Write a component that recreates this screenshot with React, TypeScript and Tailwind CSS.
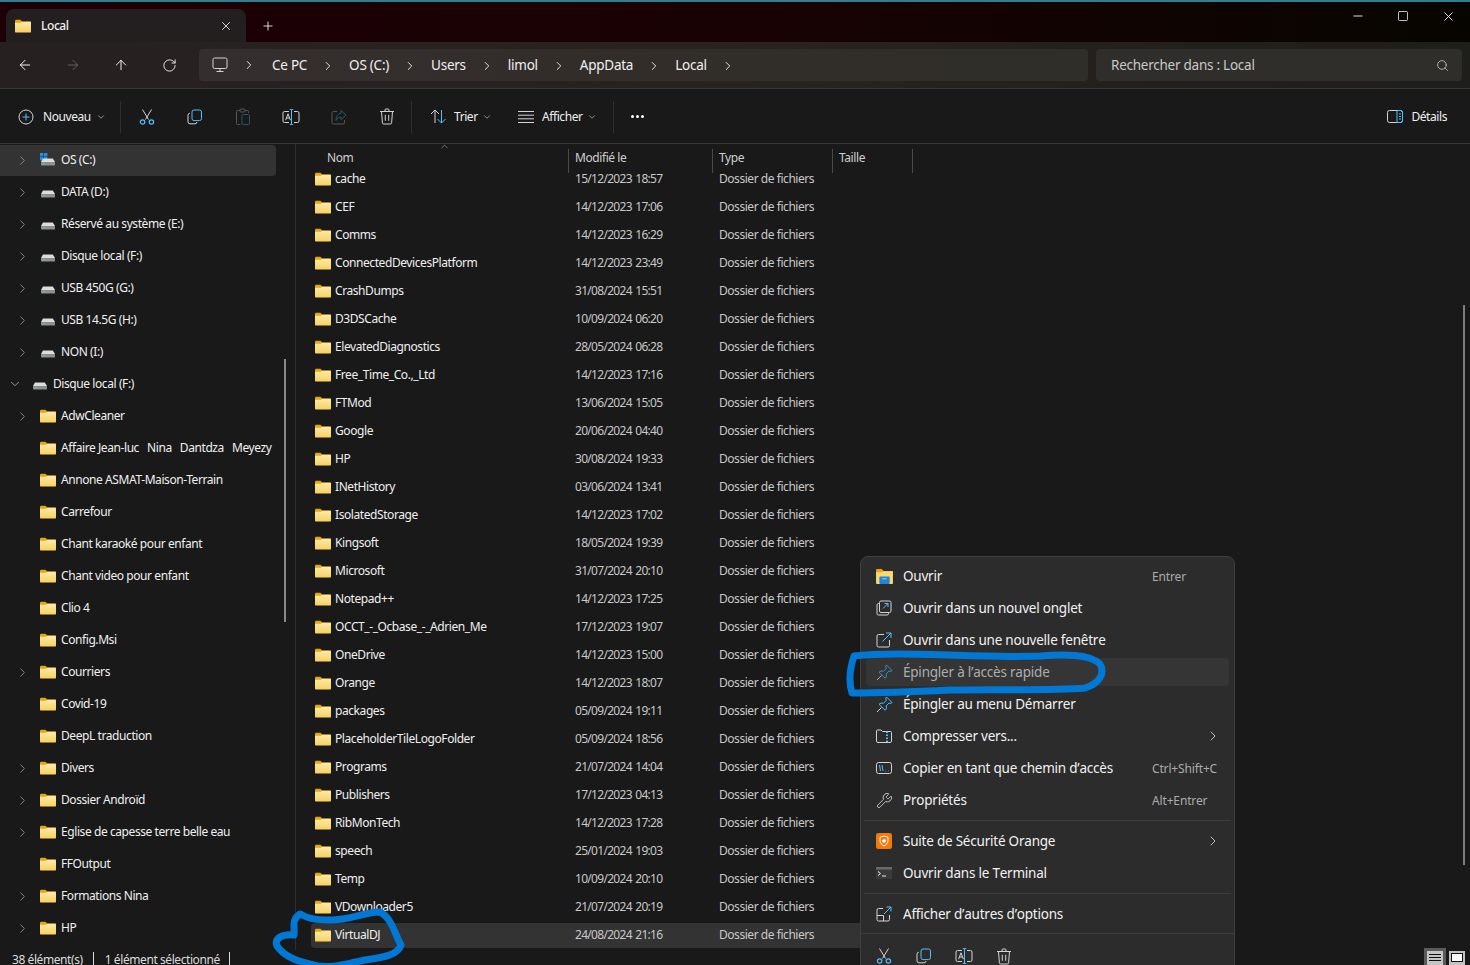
import {
  ArrowLeft,
  ArrowRight,
  ArrowUp,
  ChevronDown,
  ChevronRight,
  ChevronUp,
  Minus,
  Plus,
  RotateCw,
  Search,
  Square,
  Wrench,
  X,
} from "lucide-react";
import type { ReactNode } from "react";

const BLUE = "#4cc2ff";
const GREY = "#d4d4d4";

type IconProps = { dim?: boolean };

function FolderIcon() {
  return (
    <svg width="16" height="14" viewBox="0 0 16 14" className="shrink-0">
      <defs>
        <linearGradient id="folderFront" x1="0" y1="0" x2="0" y2="1">
          <stop offset="0" stopColor="#fdeaa8" />
          <stop offset="1" stopColor="#f9d060" />
        </linearGradient>
      </defs>
      <path d="M0 2a1.200 1.200 0 0 1 1.200-1.200h4.200L7.200 2.600H16V6H0z" fill="#e8a50c" />
      <path d="M0 3.800h5.600L7.200 2.800h7.600A1.200 1.200 0 0 1 16 4v8.400a1.200 1.200 0 0 1-1.200 1.200H1.200A1.200 1.200 0 0 1 0 12.400z" fill="url(#folderFront)" />
    </svg>
  );
}

function DriveIcon({ os }: { os?: boolean }) {
  return (
    <svg width="16" height="14" viewBox="0 0 16 14" className="shrink-0">
      {os && (
        <g fill="#1e90ea">
          <rect x="0" y="0" width="3.400" height="3.400" />
          <rect x="4" y="0" width="3.400" height="3.400" />
          <rect x="0" y="4" width="3.400" height="3.400" />
          <rect x="4" y="4" width="3.400" height="3.400" />
        </g>
      )}
      <path d="M3 5.500h9.800L15 9H1z" fill="#dcdcdc" />
      <rect x="1" y="9" width="14" height="3.400" rx="0.600" fill="#8f8f8f" />
      <rect x="3" y="10.200" width="1.400" height="1.200" fill="#4ee06a" />
    </svg>
  );
}

function NewIcon() {
  return (
    <svg width="16" height="16" viewBox="0 0 16 16" fill="none">
      <circle cx="8" cy="8" r="7" stroke={GREY} />
      <path d="M8 4.500v7M4.500 8h7" stroke={BLUE} />
    </svg>
  );
}

function CutIcon() {
  return (
    <svg width="16" height="16" viewBox="0 0 16 16" fill="none">
      <path d="M3.500 0.500l6 10M12.500 0.500l-6 10" stroke={GREY} />
      <circle cx="3.600" cy="13" r="2.200" stroke={BLUE} strokeWidth="1.200" />
      <circle cx="12.400" cy="13" r="2.200" stroke={BLUE} strokeWidth="1.200" />
    </svg>
  );
}

function CopyIcon() {
  return (
    <svg width="16" height="16" viewBox="0 0 16 16" fill="none">
      <path d="M2.800 4.200A2 2 0 0 0 1 6.200v6.600a2 2 0 0 0 2 2h5a2 2 0 0 0 2-1.800" stroke={GREY} />
      <rect x="5" y="1" width="9.500" height="10.600" rx="2" stroke={BLUE} />
    </svg>
  );
}

function PasteIcon() {
  return (
    <svg width="16" height="18" viewBox="0 0 16 18" fill="none">
      <path d="M5 2.500H2.500a1 1 0 0 0-1 1v12a1 1 0 0 0 1 1h3M10 2.500h2.500a1 1 0 0 1 1 1V5" stroke="#555" />
      <rect x="5" y="1" width="5" height="3" rx="1" stroke="#555" />
      <rect x="7" y="6.500" width="7.500" height="10" rx="1.200" stroke="#27566f" />
    </svg>
  );
}

function RenameIcon() {
  return (
    <svg width="18" height="16" viewBox="0 0 18 16" fill="none">
      <path d="M7 2.500H2.500a1.500 1.500 0 0 0-1.500 1.500v8a1.500 1.500 0 0 0 1.500 1.500H7M12 2.500h3.500A1.500 1.500 0 0 1 17 4v8a1.500 1.500 0 0 1-1.500 1.500H12" stroke={GREY} />
      <path d="M9.500 1v14M7.800 0.600h3.400M7.800 15.400h3.400" stroke={BLUE} />
      <path d="M3.600 11.200L6 4.800l2.400 6.400M4.500 9h3" stroke={GREY} />
    </svg>
  );
}

function ShareIcon() {
  return (
    <svg width="16" height="16" viewBox="0 0 16 16" fill="none">
      <path d="M6 2.500H2.500a1.500 1.500 0 0 0-1.500 1.500v9.500A1.500 1.500 0 0 0 2.500 15H12a1.500 1.500 0 0 0 1.500-1.500V11" stroke="#555" />
      <path d="M10 1.500L15 6l-5 4.500V8C7.500 8 6 9.500 5 11.500 5 8 6.500 4.500 10 4.200z" stroke="#27566f" />
    </svg>
  );
}

function TrashIcon() {
  return (
    <svg width="16" height="17" viewBox="0 0 16 17" fill="none">
      <path d="M1 3.500h14M6 3.500V2a1 1 0 0 1 1-1h2a1 1 0 0 1 1 1v1.500" stroke={GREY} />
      <path d="M2.500 3.500l.9 11.400A1.300 1.300 0 0 0 4.700 16h6.600a1.300 1.300 0 0 0 1.300-1.100l.9-11.400" stroke={GREY} />
      <path d="M6.300 6.800v6M9.700 6.800v6" stroke={GREY} />
    </svg>
  );
}

function SortIcon() {
  return (
    <svg width="17" height="15" viewBox="0 0 17 15" fill="none">
      <path d="M5 14V1M1 5l4-4 4 4" stroke={GREY} />
      <path d="M11.500 1v13M7.500 10l4 4 4-4" stroke={BLUE} />
    </svg>
  );
}

function ViewIcon() {
  return (
    <svg width="16" height="12" viewBox="0 0 16 12" fill="none" stroke={GREY}>
      <path d="M0 .5h16M0 4.200h16M0 7.800h16M0 11.500h16" />
    </svg>
  );
}

function DetailsIcon() {
  return (
    <svg width="16" height="13" viewBox="0 0 16 13" fill="none">
      <rect x="0.500" y="0.500" width="15" height="12" rx="2" stroke={GREY} />
      <path d="M10 .5v12M12 4h2M12 6.500h2M12 9h2" stroke={BLUE} />
      <path d="M10 .5h3.500a2 2 0 0 1 2 2v8a2 2 0 0 1-2 2H10" stroke={BLUE} />
    </svg>
  );
}

function PcIcon() {
  return (
    <svg width="16" height="16" viewBox="0 0 16 16" fill="none" stroke={GREY}>
      <rect x="1" y="1" width="14" height="10.500" rx="1.500" />
      <path d="M4.500 14.500h7M8 11.500v3" />
    </svg>
  );
}

function OpenIcon() {
  return (
    <svg width="17" height="15" viewBox="0 0 18 16" className="shrink-0">
      <path d="M0 1a1 1 0 0 1 1-1h5l2 2h10v4H0z" fill="#e8a50c" />
      <path d="M0 3.500h6L8 2.500h9a1 1 0 0 1 1 1V15a1 1 0 0 1-1 1H1a1 1 0 0 1-1-1z" fill="#fcd874" />
      <rect x="3.500" y="8" width="11" height="8" rx="1" fill="#1f87d6" />
      <rect x="6.500" y="10" width="5" height="1" fill="#9fd4f7" />
    </svg>
  );
}

function NewTabIcon() {
  return (
    <svg width="16" height="16" viewBox="0 0 16 16" fill="none" className="shrink-0">
      <path d="M3 3.500h-.5A1.500 1.500 0 0 0 1 5v8.500A1.500 1.500 0 0 0 2.500 15H11a1.500 1.500 0 0 0 1.500-1.500V13" stroke={GREY} />
      <rect x="3.500" y="1" width="11.500" height="11.500" rx="1.500" stroke={GREY} />
      <path d="M7 8.500L12 3.500M8.500 3.500H12V7" stroke={BLUE} />
    </svg>
  );
}

function NewWindowIcon() {
  return (
    <svg width="16" height="16" viewBox="0 0 16 16" fill="none" className="shrink-0">
      <path d="M8 2.500H2.500A1.500 1.500 0 0 0 1 4v9.500A1.500 1.500 0 0 0 2.500 15H12a1.500 1.500 0 0 0 1.500-1.500V8" stroke={GREY} />
      <path d="M6.500 9.500L15 1M10 1h5v5" stroke={BLUE} />
    </svg>
  );
}

function PinIcon({ dim }: IconProps) {
  return (
    <svg width="17" height="17" viewBox="0 0 17 17" fill="none" className="shrink-0">
      <path d="M10.500 1L16 6.500l-1 .8-2-.2-2.800 2.800c.5 1.700.1 3.300-1 4.400L3 8.300c1.100-1.100 2.700-1.500 4.400-1l2.800-2.800-.5-2.300z" stroke={dim ? "#3a8fc0" : BLUE} />
      <path d="M5.500 11.500L1 16" stroke={dim ? "#aaa" : GREY} />
    </svg>
  );
}

function ZipIcon() {
  return (
    <svg width="16" height="14" viewBox="0 0 16 14" fill="none" className="shrink-0">
      <path d="M.5 2a1 1 0 0 1 1-1h3.500l1.500 1.500h8a1 1 0 0 1 1 1V12a1.500 1.500 0 0 1-1.500 1.500H2A1.500 1.500 0 0 1 .5 12z" stroke={GREY} />
      <path d="M11 2.500V13.500" stroke={BLUE} strokeWidth="2" strokeDasharray="1.500 1.500" />
    </svg>
  );
}

function PathIcon() {
  return (
    <svg width="16" height="12" viewBox="0 0 16 12" fill="none" className="shrink-0">
      <rect x="0.500" y="0.500" width="15" height="11" rx="2" stroke={GREY} />
      <path d="M3.500 3l1 6M6 3l1 6M9.500 9h.5M12 9h.5" stroke={BLUE} />
    </svg>
  );
}

function OrangeIcon() {
  return (
    <svg width="16" height="16" viewBox="0 0 16 16" className="shrink-0">
      <rect width="16" height="16" rx="2.500" fill="#f47a0c" />
      <path d="M8 3l4 1.300v3.200c0 2.600-1.700 4.300-4 5.500-2.300-1.200-4-2.900-4-5.500V4.300z" fill="none" stroke="#fff" />
      <path d="M6 7.500l2-1.500 2 1-.5 2L8 10 6.500 9z" fill="#fff" />
    </svg>
  );
}

function TerminalIcon() {
  return (
    <svg width="16" height="12" viewBox="0 0 16 12" className="shrink-0">
      <rect width="16" height="12" fill="#3a3a3a" />
      <rect width="16" height="2.500" fill="#6a6a6a" />
      <path d="M2 4.500l2.500 2-2.500 2" fill="none" stroke="#eee" />
      <path d="M6 9h4" stroke="#eee" />
    </svg>
  );
}

function MoreIcon() {
  return (
    <svg width="16" height="16" viewBox="0 0 16 16" fill="none" className="shrink-0">
      <path d="M7 2.500H2.500A1.500 1.500 0 0 0 1 4v9.500A1.500 1.500 0 0 0 2.500 15H12a1.500 1.500 0 0 0 1.500-1.500V9M1 9.500h6.500V15" stroke={GREY} />
      <path d="M8 8l7-7M10.500 1H15v4.500" stroke={BLUE} />
    </svg>
  );
}

const crumbs = ["Ce PC", "OS (C:)", "Users", "limol", "AppData", "Local"];

const drives: { name: string; os?: boolean }[] = [
  { name: "OS (C:)", os: true },
  { name: "DATA (D:)" },
  { name: "Réservé au système (E:)" },
  { name: "Disque local (F:)" },
  { name: "USB 450G (G:)" },
  { name: "USB 14.5G (H:)" },
  { name: "NON (I:)" },
];

const tree: [string, boolean][] = [
  ["AdwCleaner", true],
  ["Affaire Jean-luc   Nina   Dantdza   Meyezy", false],
  ["Annone ASMAT-Maison-Terrain", false],
  ["Carrefour", false],
  ["Chant karaoké pour enfant", false],
  ["Chant video pour enfant", false],
  ["Clio 4", false],
  ["Config.Msi", false],
  ["Courriers", true],
  ["Covid-19", false],
  ["DeepL traduction", false],
  ["Divers", true],
  ["Dossier Androïd", true],
  ["Eglise de capesse terre belle eau", true],
  ["FFOutput", false],
  ["Formations Nina", true],
  ["HP", true],
];

const files: [string, string][] = [
  ["cache", "15/12/2023 18:57"],
  ["CEF", "14/12/2023 17:06"],
  ["Comms", "14/12/2023 16:29"],
  ["ConnectedDevicesPlatform", "14/12/2023 23:49"],
  ["CrashDumps", "31/08/2024 15:51"],
  ["D3DSCache", "10/09/2024 06:20"],
  ["ElevatedDiagnostics", "28/05/2024 06:28"],
  ["Free_Time_Co.,_Ltd", "14/12/2023 17:16"],
  ["FTMod", "13/06/2024 15:05"],
  ["Google", "20/06/2024 04:40"],
  ["HP", "30/08/2024 19:33"],
  ["INetHistory", "03/06/2024 13:41"],
  ["IsolatedStorage", "14/12/2023 17:02"],
  ["Kingsoft", "18/05/2024 19:39"],
  ["Microsoft", "31/07/2024 20:10"],
  ["Notepad++", "14/12/2023 17:25"],
  ["OCCT_-_Ocbase_-_Adrien_Me", "17/12/2023 19:07"],
  ["OneDrive", "14/12/2023 15:00"],
  ["Orange", "14/12/2023 18:07"],
  ["packages", "05/09/2024 19:11"],
  ["PlaceholderTileLogoFolder", "05/09/2024 18:56"],
  ["Programs", "21/07/2024 14:04"],
  ["Publishers", "17/12/2023 04:13"],
  ["RibMonTech", "14/12/2023 17:28"],
  ["speech", "25/01/2024 19:03"],
  ["Temp", "10/09/2024 20:10"],
  ["VDownloader5", "21/07/2024 20:19"],
  ["VirtualDJ", "24/08/2024 21:16"],
];

function ToolButton({ children }: { children: ReactNode }) {
  return <div className="flex w-[48px] items-center justify-center">{children}</div>;
}

function ToolSep() {
  return <div className="h-[32px] w-px bg-[#2f2f2f]" />;
}

function SideRow({ chevron, selected, children }: { chevron?: boolean; selected?: boolean; children: ReactNode }) {
  return (
    <div className="flex h-[32px] items-center">
      <div className={`flex h-[31px] w-[276px] items-center rounded-r-sm pl-[15px] ${selected ? "bg-[#333333]" : ""}`}>
        <div className="w-[25px] shrink-0">
          {chevron && <ChevronRight size={15} strokeWidth={1.6} className="text-[#858585]" />}
        </div>
        {children}
      </div>
    </div>
  );
}

function MenuRow({
  icon,
  label,
  shortcut,
  arrow,
  highlighted,
}: {
  icon: ReactNode;
  label: string;
  shortcut?: string;
  arrow?: boolean;
  highlighted?: boolean;
}) {
  return (
    <div className="flex h-[32px] items-center">
      <div className={`mx-[5px] flex h-[28px] w-[363px] items-center rounded ${highlighted ? "bg-[#353535]" : ""}`}>
        <div className="flex w-[37px] shrink-0 justify-center pr-[1px]">{icon}</div>
        <span className={`text-[13.5px] tracking-[-0.22px] [font-kerning:none] ${highlighted ? "text-[#adadad]" : "text-[#f2f2f2]"}`}>{label}</span>
        <div className="flex-1" />
        {shortcut && <span className="mt-[1px] w-[77px] shrink-0 text-[12px] tracking-[-0.15px] text-[#ababab]">{shortcut}</span>}
        {arrow && <ChevronRight size={16} strokeWidth={1.5} className="mr-[8px] text-[#bdbdbd]" />}
      </div>
    </div>
  );
}

function MenuSep() {
  return <div className="mx-[3px] my-[4px] h-px bg-[#3d3d3d]" />;
}

export default function App() {
  return (
    <div className="relative flex h-screen w-full flex-col overflow-hidden bg-[#191919] font-['Noto_Sans',sans-serif] text-[12px] tracking-[-0.42px] text-[#f0f0f0]">
      {/* title bar */}
      <div className="h-[2px] bg-[#2f7f8e]" />
      <div className="flex h-[40px] items-end bg-[linear-gradient(90deg,#1c0005_0%,#190204_50%,#070500_100%)]">
        <div className="ml-[6px] flex h-[33px] w-[240px] items-center rounded-t-lg bg-[#231f20] pl-[9px] pr-[13px]">
          <FolderIcon />
          <span className="ml-[10px] flex-1 font-medium">Local</span>
          <X size={14} strokeWidth={1.5} />
        </div>
        <div className="flex h-[33px] w-[44px] items-center justify-center">
          <Plus size={14} strokeWidth={1.5} />
        </div>
        <div className="flex-1" />
        <div className="flex h-[40px] items-start pt-[7px]">
          <div className="flex w-[45px] justify-center"><Minus size={14} strokeWidth={1.6} /></div>
          <div className="flex w-[46px] justify-center"><Square size={12} strokeWidth={1.6} className="mt-[1px]" /></div>
          <div className="flex w-[44px] justify-center"><X size={15} strokeWidth={1.5} /></div>
        </div>
      </div>

      {/* address bar */}
      <div className="flex h-[47px] items-center border-b border-[#3a3a3a] bg-[linear-gradient(90deg,#262021_0%,#29231f_50%,#1e1e1a_100%)] pl-px">
        <div className="flex w-[48px] justify-center"><ArrowLeft size={16} strokeWidth={1.5} /></div>
        <div className="flex w-[48px] justify-center"><ArrowRight size={16} strokeWidth={1.5} className="text-[#5f5f5f]" /></div>
        <div className="flex w-[48px] justify-center"><ArrowUp size={16} strokeWidth={1.5} /></div>
        <div className="flex w-[48px] justify-center"><RotateCw size={15} strokeWidth={1.5} /></div>
        <div className="ml-[6px] flex h-[32px] w-[889px] items-center rounded bg-[linear-gradient(90deg,#352e2e_0%,#322d29_50%,#2f2e29_100%)] pl-[13px] text-[13.5px] tracking-[-0.25px]">
          <PcIcon />
          <ChevronRight size={14} strokeWidth={1.6} className="ml-[14px] mr-[16px]" />
          {crumbs.map((c) => (
            <div key={c} className="flex items-center pt-[1px]">
              <span>{c}</span>
              <ChevronRight size={14} strokeWidth={1.6} className="ml-[14px] mr-[14px]" />
            </div>
          ))}
        </div>
        <div className="ml-[8px] flex h-[32px] w-[366px] items-center justify-between rounded bg-[#2f2e2a] pl-[15px] pr-[13px] text-[13.5px] tracking-[-0.25px] text-[#c9c9c9]">
          <span className="pt-[1px]">Rechercher dans : Local</span>
          <Search size={13} strokeWidth={1.5} />
        </div>
      </div>

      {/* command bar */}
      <div className="flex h-[55px] shrink-0 items-center border-b border-[#3a3a3a] pt-[1px]">
        <div className="flex w-[120px] items-center pl-[18px]">
          <NewIcon />
          <span className="ml-[9px]">Nouveau</span>
          <ChevronDown size={10} className="ml-[5px] text-[#a8a8a8]" />
        </div>
        <ToolSep />
        <div className="flex pl-[2px]">
          <ToolButton><CutIcon /></ToolButton>
          <ToolButton><CopyIcon /></ToolButton>
          <ToolButton><PasteIcon /></ToolButton>
          <ToolButton><RenameIcon /></ToolButton>
          <ToolButton><ShareIcon /></ToolButton>
          <ToolButton><TrashIcon /></ToolButton>
        </div>
        <ToolSep />
        <div className="flex w-[88px] items-center pl-[18px]">
          <SortIcon />
          <span className="ml-[7px]">Trier</span>
          <ChevronDown size={10} className="ml-[4px] text-[#a8a8a8]" />
        </div>
        <div className="flex w-[113px] items-center pl-[18px]">
          <ViewIcon />
          <span className="ml-[8px]">Afficher</span>
          <ChevronDown size={10} className="ml-[4px] text-[#a8a8a8]" />
        </div>
        <ToolSep />
        <div className="flex w-[46px] justify-center gap-[2px]">
          <div className="h-[3px] w-[3px] rounded-full bg-white" />
          <div className="h-[3px] w-[3px] rounded-full bg-white" />
          <div className="h-[3px] w-[3px] rounded-full bg-white" />
        </div>
        <div className="flex-1" />
        <div className="mr-[23px] flex items-center gap-[8px]">
          <DetailsIcon />
          <span>Détails</span>
        </div>
      </div>

      {/* main */}
      <div className="flex min-h-0 flex-1">
        <div className="relative h-full w-[296px] shrink-0 overflow-hidden border-r border-[#2d2d2d]">
          {drives.map((d, i) => (
            <SideRow key={d.name} chevron selected={i === 0}>
              <DriveIcon os={d.os} />
              <span className="ml-[5px] whitespace-pre">{d.name}</span>
            </SideRow>
          ))}
          <div className="flex h-[32px] items-center pl-[8px]">
            <ChevronDown size={14} strokeWidth={1.6} className="mr-[10px] text-[#a0a0a0]" />
            <DriveIcon />
            <span className="ml-[5px]">Disque local (F:)</span>
          </div>
          {tree.map(([name, chevron]) => (
            <SideRow key={name} chevron={chevron}>
              <FolderIcon />
              <span className="ml-[5px] whitespace-pre">{name}</span>
            </SideRow>
          ))}
          <div className="absolute left-[284px] top-[215px] h-[263px] w-[2px] bg-[#8a8a8a]" />
        </div>

        <div className="relative min-w-0 flex-1 overflow-hidden">
          <div className="relative flex h-[21px] pt-[5px] text-[#cfcfcf]">
            <div className="w-[272px] shrink-0 pl-[31px]">Nom</div>
            <div className="h-[24px] w-[144px] shrink-0 border-l border-[#4a4a4a] pl-[6px]">Modifié le</div>
            <div className="h-[24px] w-[120px] shrink-0 border-l border-[#4a4a4a] pl-[6px]">Type</div>
            <div className="h-[24px] w-[81px] shrink-0 border-l border-r border-[#4a4a4a] pl-[6px]">Taille</div>
            <ChevronUp size={11} strokeWidth={1.5} className="absolute left-[143px] top-[-3px] text-[#9a9a9a]" />
          </div>
          {files.map(([name, date], i) => (
            <div key={name} className="flex h-[28px] items-center">
              <div className={`ml-[15px] grid h-[25px] w-[560px] grid-cols-[260px_144px_1fr] items-center rounded-l-sm pl-[4px] ${i === files.length - 1 ? "bg-[#333333]" : ""}`}>
                <div className="flex items-center gap-[4px]">
                  <FolderIcon />
                  <span className="whitespace-pre">{name}</span>
                </div>
                <span className="tracking-[-0.7px] text-[#c8c8c8] [word-spacing:1px]">{date}</span>
                <span className="tracking-[-0.45px] text-[#c8c8c8]">Dossier de fichiers</span>
              </div>
            </div>
          ))}
          <div className="absolute left-[1167px] top-[161px] h-[560px] w-[2px] bg-[#7d7d7d]" />
        </div>
      </div>

      {/* status bar */}
      <div className="flex h-[15px] shrink-0 items-start pl-[12px] pt-[1px] text-[#dcdcdc]">
        <span>38 élément(s)</span>
        <div className="ml-[10px] mt-[1px] h-[13px] w-px bg-[#dcdcdc]" />
        <span className="ml-[11px]">1 élément sélectionné</span>
        <div className="ml-[9px] mt-[1px] h-[13px] w-px bg-[#dcdcdc]" />
        <div className="flex-1" />
        <div className="mr-[5px] -mt-[3px] flex h-[18px] items-start">
          <div className="flex h-[18px] w-[22px] justify-center bg-[#5a5a5a] pt-[3px]">
            <div className="flex h-[15px] w-[16px] flex-col gap-[2px] bg-[#c4c4c4] px-[2px] pt-[3px]">
              <div className="h-px bg-[#111]" />
              <div className="h-px bg-[#111]" />
              <div className="h-px bg-[#111]" />
            </div>
          </div>
          <div className="ml-[3px] mt-[3px] h-[15px] w-[16px] bg-[#c4c4c4] p-[2px]">
            <div className="h-[9px] border border-[#111] bg-white" />
          </div>
        </div>
      </div>

      {/* context menu */}
      <div className="absolute left-[860px] top-[556px] h-[420px] w-[375px] rounded-lg border border-[#3f3f3f] bg-[#2c2c2c] py-[3px]">
        <MenuRow icon={<OpenIcon />} label="Ouvrir" shortcut="Entrer" />
        <MenuRow icon={<NewTabIcon />} label="Ouvrir dans un nouvel onglet" />
        <MenuRow icon={<NewWindowIcon />} label="Ouvrir dans une nouvelle fenêtre" />
        <MenuRow icon={<PinIcon dim />} label="Épingler à l’accès rapide" highlighted />
        <MenuRow icon={<PinIcon />} label="Épingler au menu Démarrer" />
        <MenuRow icon={<ZipIcon />} label="Compresser vers..." arrow />
        <MenuRow icon={<PathIcon />} label="Copier en tant que chemin d’accès" shortcut="Ctrl+Shift+C" />
        <MenuRow icon={<Wrench size={17} strokeWidth={1.2} className="text-[#d4d4d4]" />} label="Propriétés" shortcut="Alt+Entrer" />
        <MenuSep />
        <MenuRow icon={<OrangeIcon />} label="Suite de Sécurité Orange" arrow />
        <MenuRow icon={<TerminalIcon />} label="Ouvrir dans le Terminal" />
        <MenuSep />
        <MenuRow icon={<MoreIcon />} label="Afficher d’autres d’options" />
        <div className="mt-[3px] h-px bg-[#3d3d3d]" />
        <div className="flex pl-[3px] pt-[14px]">
          <div className="flex w-[40px] justify-center"><CutIcon /></div>
          <div className="flex w-[40px] justify-center"><CopyIcon /></div>
          <div className="flex w-[40px] justify-center"><RenameIcon /></div>
          <div className="flex w-[40px] justify-center"><TrashIcon /></div>
        </div>
      </div>

      {/* hand drawn marks */}
      <svg className="pointer-events-none absolute left-0 top-0" width="1470" height="965" viewBox="0 0 1470 965" fill="none">
        <path
          d="M854 656C870 654 885 654 900 654C950 654 990 658 1040 656C1065 654 1090 654 1100 664C1106 674 1098 684 1085 688C1050 691 1000 689 950 690C910 692 880 693 852 693C848 680 850 668 854 656Z"
          stroke="#0078d4"
          strokeWidth="7"
          strokeLinejoin="round"
        />
        <path
          d="M300 914C305 916 308 920 330 920C350 920 365 912 380 912C392 918 395 935 401 945C398 955 385 957 365 960C345 964 335 968 318 966C300 962 285 958 277 946C274 938 282 934 294 935C295 927 291 920 300 914Z"
          stroke="#0078d4"
          strokeWidth="7"
          strokeLinejoin="round"
        />
      </svg>
    </div>
  );
}
